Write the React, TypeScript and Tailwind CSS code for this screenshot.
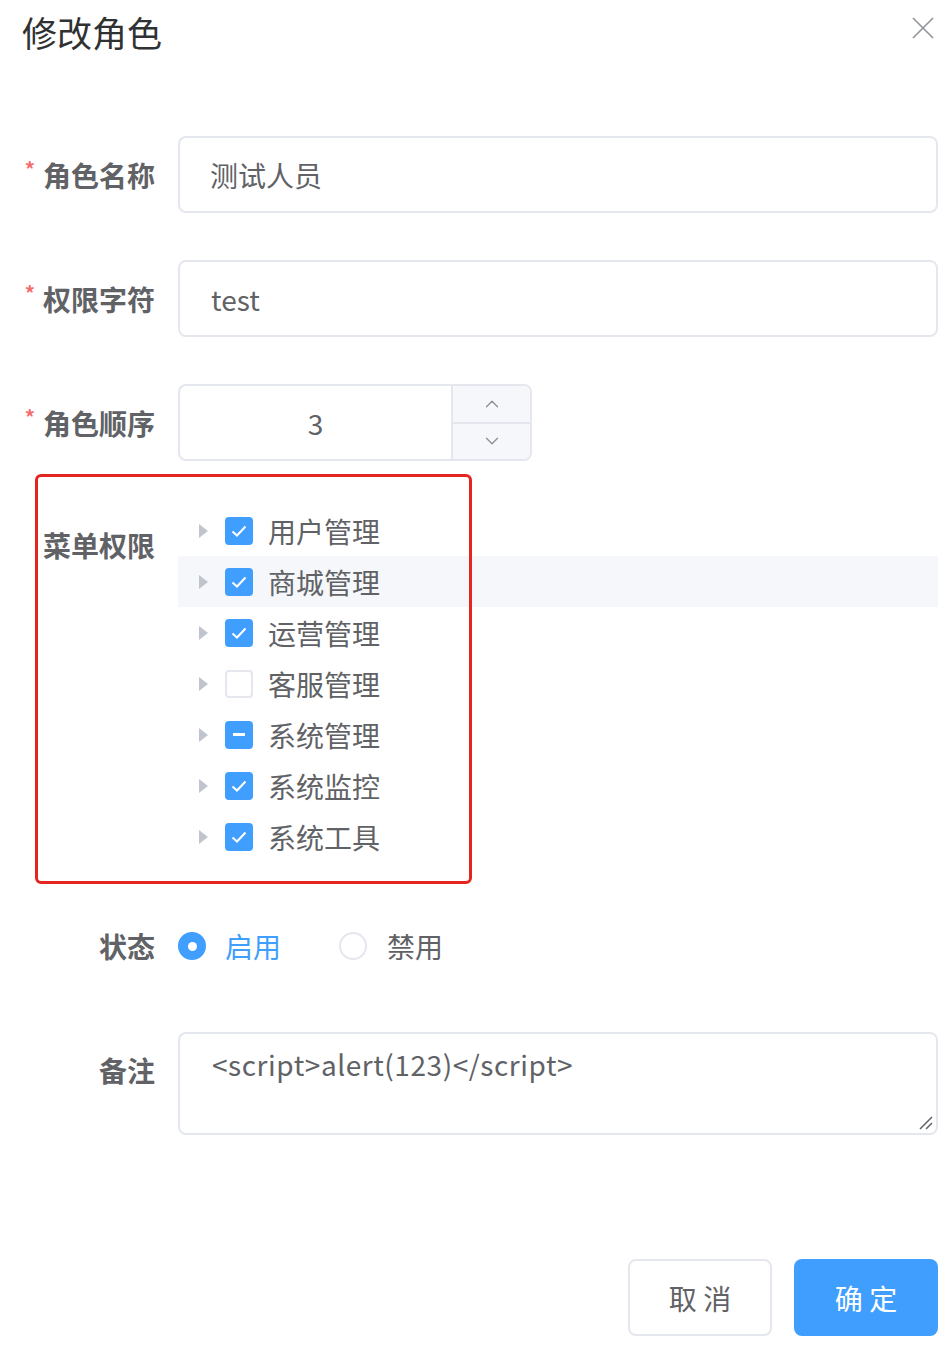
import { ChevronUp, ChevronDown } from 'lucide-react';

const font = { fontFamily: '"Noto Sans CJK SC", "Noto Sans", sans-serif' };

const menus = [
  { name: '用户管理', state: 'checked' },
  { name: '商城管理', state: 'checked', hover: true },
  { name: '运营管理', state: 'checked' },
  { name: '客服管理', state: 'none' },
  { name: '系统管理', state: 'half' },
  { name: '系统监控', state: 'checked' },
  { name: '系统工具', state: 'checked' },
];

const Label = ({ text, required }: { text: string; required?: boolean }) => (
  <div className="w-[155px] shrink-0 flex justify-end items-center text-[28px] font-bold text-[#606266] leading-[40px]">
    {required && <span className="text-[#f56c6c] text-[20px] leading-none self-start mt-[4px] mr-[8px]">*</span>}
    {text}
  </div>
);

const Checkbox = ({ state }: { state: string }) => {
  if (state === 'none') {
    return <div className="w-[28px] h-[28px] rounded-[4px] border-2 border-[#e4e7ed] bg-white" />;
  }
  return (
    <div className="w-[28px] h-[28px] rounded-[4px] bg-[#409eff] flex items-center justify-center">
      {state === 'half' ? (
        <div className="w-[12px] h-[3px] bg-white" />
      ) : (
        <svg width="28" height="28" viewBox="0 0 28 28">
          <polyline points="7.5,14.5 12,18.5 20.5,9.5" fill="none" stroke="white" strokeWidth="2" />
        </svg>
      )}
    </div>
  );
};

export default function App() {
  return (
    <div className="w-[947px] h-[1352px] bg-white" style={font}>
      {/* Header */}
      <div className="flex items-start justify-between pl-[22px] pr-[12px] pt-[12px]">
        <h1 className="text-[35px] leading-[40px] text-[#303133]">修改角色</h1>
        <svg width="24" height="24" viewBox="0 0 24 24" className="mt-[4px]">
          <path d="M2 2 L22 22 M22 2 L2 22" stroke="#909399" strokeWidth="1.6" />
        </svg>
      </div>

      {/* Form */}
      <div className="mt-[84px]">
        <div className="flex items-center">
          <Label text="角色名称" required />
          <div className="ml-[23px] w-[760px] h-[77px] border-2 border-[#e4e7ed] rounded-[8px] flex items-center pl-[30px] text-[28px] text-[#606266]">
            测试人员
          </div>
        </div>

        <div className="flex items-center mt-[47px]">
          <Label text="权限字符" required />
          <div className="ml-[23px] w-[760px] h-[77px] border-2 border-[#e4e7ed] rounded-[8px] flex items-center pl-[31px] text-[28px] text-[#606266]">
            test
          </div>
        </div>

        <div className="flex items-center mt-[47px]">
          <Label text="角色顺序" required />
          <div className="ml-[23px] w-[354px] h-[77px] border-2 border-[#e4e7ed] rounded-[8px] flex overflow-hidden">
            <div className="flex-1 flex items-center justify-center text-[28px] text-[#606266]">3</div>
            <div className="w-[79px] bg-[#f5f7fa] border-l-2 border-[#e4e7ed] flex flex-col">
              <div className="flex-1 flex items-center justify-center border-b-2 border-[#e4e7ed]">
                <ChevronUp size={22} strokeWidth={1.5} color="#909399" />
              </div>
              <div className="flex-1 flex items-center justify-center">
                <ChevronDown size={22} strokeWidth={1.5} color="#909399" />
              </div>
            </div>
          </div>
        </div>

        {/* Menu permissions */}
        <div className="relative flex items-start mt-[44px]">
          <div className="h-[80px] flex items-center">
            <Label text="菜单权限" />
          </div>
          <div className="ml-[23px] w-[760px] flex flex-col">
            {menus.map(m => (
              <div key={m.name} className={`h-[51px] flex items-center ${m.hover ? 'bg-[#f5f7fa]' : ''}`}>
                <svg width="12" height="16" viewBox="0 0 12 16" className="ml-[20px] mr-[15px]">
                  <polygon points="1,1 10,8 1,15" fill="#c0c4cc" />
                </svg>
                <Checkbox state={m.state} />
                <span className="ml-[15px] text-[28px] text-[#606266]">{m.name}</span>
              </div>
            ))}
          </div>
          <div className="absolute left-[35px] top-[-31px] w-[437px] h-[410px] border-[3px] border-[#e3261f] rounded-[6px] pointer-events-none" />
        </div>

        {/* Status */}
        <div className="flex items-center h-[80px] mt-[44px]">
          <Label text="状态" />
          <div className="ml-[23px] flex items-center">
            <div className="w-[28px] h-[28px] rounded-full bg-[#409eff] flex items-center justify-center">
              <div className="w-[9px] h-[9px] rounded-full bg-white" />
            </div>
            <span className="ml-[19px] text-[28px] text-[#409eff]">启用</span>
            <div className="ml-[58px] w-[28px] h-[28px] rounded-full border-2 border-[#e4e7ed] bg-white" />
            <span className="ml-[20px] text-[28px] text-[#606266]">禁用</span>
          </div>
        </div>

        {/* Remark */}
        <div className="flex items-start mt-[46px]">
          <div className="h-[76px] flex items-center">
            <Label text="备注" />
          </div>
          <div className="relative ml-[23px] w-[760px] h-[103px] border-2 border-[#e4e7ed] rounded-[8px] pl-[32px] pt-[10px] text-[28px] leading-[40px] text-[#606266] tracking-[0.02em]">
            {'<script>alert(123)</script>'}
            <svg width="16" height="16" viewBox="0 0 16 16" className="absolute right-[3px] bottom-[3px]">
              <path d="M15 3 L3 15 M15 9 L9 15" stroke="#606266" strokeWidth="1.5" />
            </svg>
          </div>
        </div>

        {/* Footer */}
        <div className="flex justify-end gap-[22px] pr-[9px] mt-[124px]">
          <button className="w-[144px] h-[77px] border-2 border-[#e4e7ed] rounded-[8px] bg-white text-[28px] text-[#606266]">
            取 消
          </button>
          <button className="w-[144px] h-[77px] rounded-[8px] bg-[#409eff] text-[28px] text-white">
            确 定
          </button>
        </div>
      </div>
    </div>
  );
}
